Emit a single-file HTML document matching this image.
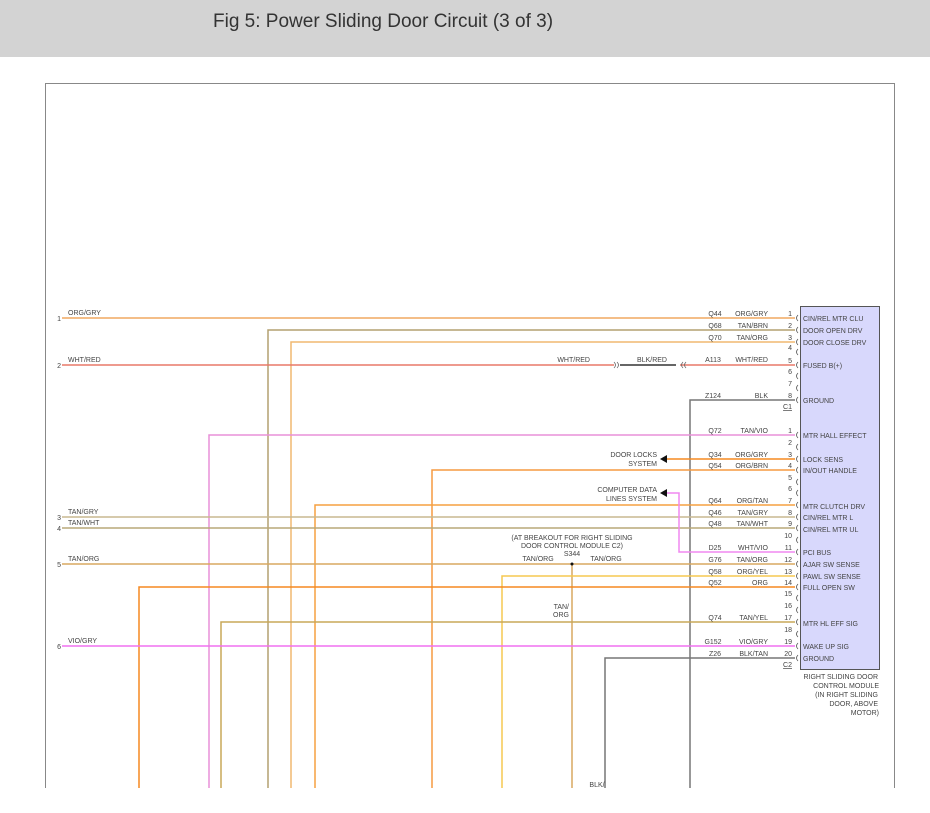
<!DOCTYPE html>
<html><head><meta charset="utf-8">
<style>
html,body{margin:0;padding:0;background:#fff;width:930px;height:813px;overflow:hidden}
.hdr{position:absolute;left:0;top:0;width:930px;height:57px;background:#d3d3d3}
.hdr span{position:absolute;left:213px;top:11px;font-family:"Liberation Sans",sans-serif;font-size:19px;color:#333}
svg{position:absolute;left:0;top:0}
text{font-family:"Liberation Sans",sans-serif;font-size:7px;fill:#444}
</style></head><body>
<div class="hdr"><span>Fig 5: Power Sliding Door Circuit (3 of 3)</span></div>
<svg width="930" height="813" viewBox="0 0 930 813">
<rect x="45.5" y="83.5" width="849" height="740" fill="none" stroke="#888" stroke-width="1"/>
<rect x="0" y="788" width="930" height="25" fill="#fff"/>
<g fill="none" stroke-width="1.5">
<path d="M62 318H795" stroke="#f0a860"/>
<path d="M268 788V330H795" stroke="#b4a070"/>
<path d="M291 788V342H795" stroke="#f0b870"/>
<path d="M62 365H614M680 365H795" stroke="#e87868"/>
<path d="M620 365H676" stroke="#666" stroke-width="2"/>
<path d="M690 788V400H795" stroke="#777"/>
<path d="M209 788V435H795" stroke="#e890d8"/>
<path d="M667 459H795" stroke="#f58a20"/>
<path d="M432 788V470H795" stroke="#f59a40"/>
<path d="M315 788V505H795" stroke="#f5a040"/>
<path d="M62 517H795" stroke="#c8b890"/>
<path d="M62 528H795" stroke="#b8a878"/>
<path d="M795 552H679V493H667" stroke="#f088f0"/>
<path d="M62 564H795M572 564V788" stroke="#d8a860"/>
<path d="M502 788V576H795" stroke="#f5c850"/>
<path d="M139 788V587H795" stroke="#f58820"/>
<path d="M221 788V622H795" stroke="#c8a858"/>
<path d="M62 646H795" stroke="#f070f0"/>
<path d="M605 788V658H795" stroke="#777"/>
</g>
<g fill="none" stroke="#666" stroke-width="0.8">
<path d="M614 362q3 3 0 6M617 362q3 3 0 6M683 362q-3 3 0 6M686 362q-3 3 0 6"/>
</g>
<polygon points="660,459 667,455 667,463" fill="#111"/>
<polygon points="660,493 667,489 667,497" fill="#111"/>
<circle cx="572" cy="564" r="1.5" fill="#111"/>
<rect x="800.5" y="306.5" width="79" height="363" fill="#d8d8fc" stroke="#555" stroke-width="1"/>
<g fill="none" stroke="#555" stroke-width="0.8">
<path d="M798 315q-3 3 0 6M798 327q-3 3 0 6M798 339q-3 3 0 6M798 349q-3 3 0 6M798 362q-3 3 0 6M798 373q-3 3 0 6M798 385q-3 3 0 6M798 397q-3 3 0 6"/>
<path d="M798 432q-3 3 0 6M798 444q-3 3 0 6M798 456q-3 3 0 6M798 467q-3 3 0 6M798 479q-3 3 0 6M798 490q-3 3 0 6M798 502q-3 3 0 6M798 514q-3 3 0 6M798 525q-3 3 0 6M798 537q-3 3 0 6M798 549q-3 3 0 6M798 561q-3 3 0 6M798 573q-3 3 0 6M798 584q-3 3 0 6M798 595q-3 3 0 6M798 607q-3 3 0 6M798 619q-3 3 0 6M798 631q-3 3 0 6M798 643q-3 3 0 6M798 655q-3 3 0 6"/>
</g>
<g text-anchor="end">
<text x="792" y="316">1</text><text x="792" y="328">2</text><text x="792" y="340">3</text><text x="792" y="350">4</text><text x="792" y="363">5</text><text x="792" y="374">6</text><text x="792" y="386">7</text><text x="792" y="398">8</text>
<text x="792" y="433">1</text><text x="792" y="445">2</text><text x="792" y="457">3</text><text x="792" y="468">4</text><text x="792" y="480">5</text><text x="792" y="491">6</text><text x="792" y="503">7</text><text x="792" y="515">8</text><text x="792" y="526">9</text><text x="792" y="538">10</text><text x="792" y="550">11</text><text x="792" y="562">12</text><text x="792" y="574">13</text><text x="792" y="585">14</text><text x="792" y="596">15</text><text x="792" y="608">16</text><text x="792" y="620">17</text><text x="792" y="632">18</text><text x="792" y="644">19</text><text x="792" y="656">20</text>
<text x="792" y="409" text-decoration="underline">C1</text>
<text x="792" y="667" text-decoration="underline">C2</text>
<text x="768" y="316">ORG/GRY</text><text x="768" y="328">TAN/BRN</text><text x="768" y="340">TAN/ORG</text><text x="768" y="362">WHT/RED</text><text x="768" y="398">BLK</text>
<text x="768" y="433">TAN/VIO</text><text x="768" y="457">ORG/GRY</text><text x="768" y="468">ORG/BRN</text><text x="768" y="503">ORG/TAN</text><text x="768" y="515">TAN/GRY</text><text x="768" y="526">TAN/WHT</text><text x="768" y="550">WHT/VIO</text><text x="768" y="562">TAN/ORG</text><text x="768" y="574">ORG/YEL</text><text x="768" y="585">ORG</text><text x="768" y="620">TAN/YEL</text><text x="768" y="644">VIO/GRY</text><text x="768" y="656">BLK/TAN</text>
<text x="590" y="362">WHT/RED</text><text x="667" y="362">BLK/RED</text>
<text x="657" y="457">DOOR LOCKS</text><text x="657" y="466">SYSTEM</text>
<text x="657" y="492">COMPUTER DATA</text><text x="657" y="501">LINES SYSTEM</text>
<text x="569" y="609">TAN/</text><text x="569" y="617">ORG</text>
<text x="878" y="679">RIGHT SLIDING DOOR</text><text x="879" y="688">CONTROL MODULE</text><text x="878" y="697">(IN RIGHT SLIDING</text><text x="878" y="706">DOOR, ABOVE</text><text x="879" y="715">MOTOR)</text>
</g>
<g text-anchor="middle">
<text x="715" y="316">Q44</text><text x="715" y="328">Q68</text><text x="715" y="340">Q70</text><text x="713" y="362">A113</text><text x="713" y="398">Z124</text>
<text x="715" y="433">Q72</text><text x="715" y="457">Q34</text><text x="715" y="468">Q54</text><text x="715" y="503">Q64</text><text x="715" y="515">Q46</text><text x="715" y="526">Q48</text><text x="715" y="550">D25</text><text x="715" y="562">G76</text><text x="715" y="574">Q58</text><text x="715" y="585">Q52</text><text x="715" y="620">Q74</text><text x="713" y="644">G152</text><text x="715" y="656">Z26</text>
<text x="572" y="540">(AT BREAKOUT FOR RIGHT SLIDING</text><text x="572" y="548">DOOR CONTROL MODULE C2)</text>
<text x="572" y="556">S344</text><text x="538" y="561">TAN/ORG</text><text x="606" y="561">TAN/ORG</text>
<text x="597" y="787">BLK/</text>
</g>
<text x="68" y="315">ORG/GRY</text><text x="68" y="362">WHT/RED</text><text x="68" y="514">TAN/GRY</text><text x="68" y="525">TAN/WHT</text><text x="68" y="561">TAN/ORG</text><text x="68" y="643">VIO/GRY</text>
<g text-anchor="end">
<text x="61" y="321">1</text><text x="61" y="368">2</text><text x="61" y="520">3</text><text x="61" y="531">4</text><text x="61" y="567">5</text><text x="61" y="649">6</text>
</g>
<g>
<text x="803" y="321">CIN/REL MTR CLU</text><text x="803" y="333">DOOR OPEN DRV</text><text x="803" y="345">DOOR CLOSE DRV</text><text x="803" y="368">FUSED B(+)</text><text x="803" y="403">GROUND</text>
<text x="803" y="438">MTR HALL EFFECT</text><text x="803" y="462">LOCK SENS</text><text x="803" y="473">IN/OUT HANDLE</text><text x="803" y="509">MTR CLUTCH DRV</text><text x="803" y="520">CIN/REL MTR L</text><text x="803" y="532">CIN/REL MTR UL</text><text x="803" y="555">PCI BUS</text><text x="803" y="567">AJAR SW SENSE</text><text x="803" y="579">PAWL SW SENSE</text><text x="803" y="590">FULL OPEN SW</text><text x="803" y="626">MTR HL EFF SIG</text><text x="803" y="649">WAKE UP SIG</text><text x="803" y="661">GROUND</text>
</g>
</svg>
</body></html>
